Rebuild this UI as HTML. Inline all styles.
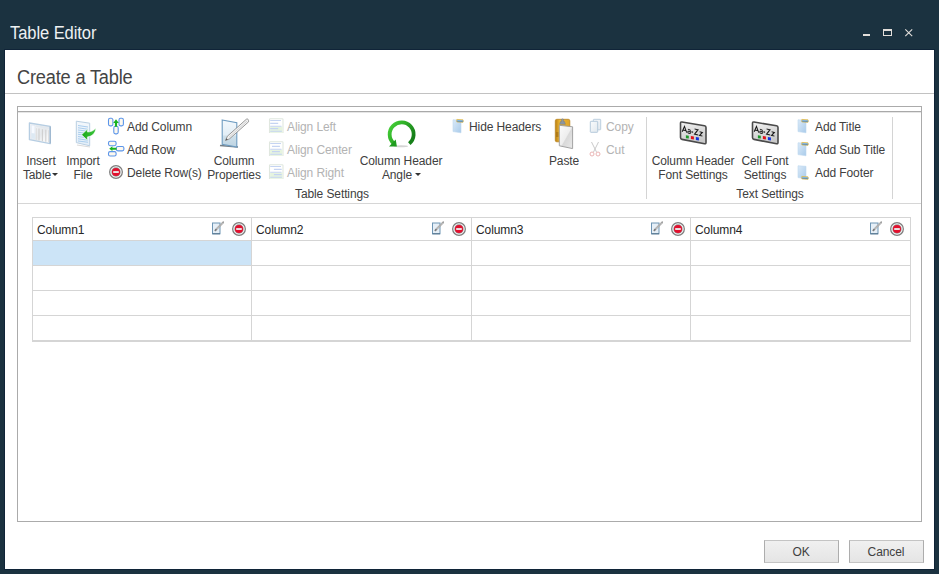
<!DOCTYPE html>
<html><head><meta charset="utf-8">
<style>
*{margin:0;padding:0;box-sizing:border-box}
html,body{width:939px;height:574px;overflow:hidden;background:#1b3240}
body{position:relative;font-family:"Liberation Sans",sans-serif}
.abs{position:absolute}
.t{position:absolute;font:12px/14px "Liberation Sans",sans-serif;white-space:nowrap;color:#404040;letter-spacing:-0.1px}
.c{text-align:center;width:120px}
.dis{color:#b3b3b3}
#win{position:absolute;left:4px;top:49px;width:931px;height:521px;border:1px solid #102438;background:#fff}
.hl{position:absolute;height:1px}
.vl{position:absolute;width:1px}
svg{position:absolute;overflow:visible}
.btn{position:absolute;top:540px;width:75px;height:23px;border:1px solid #adadad;border-top-color:#c4c4c4;border-bottom-color:#c4c4c4;background:linear-gradient(#f0f0f0,#e5e5e5)}
</style></head><body>

<!-- ICONS -->
<svg width="0" height="0" style="position:absolute">
<defs>
<symbol id="del" viewBox="0 0 14 14">
<circle cx="7" cy="7" r="6.35" fill="#f5f5f5" stroke="#7e7e7e" stroke-width="1.25"/>
<circle cx="7" cy="7" r="4.65" fill="#9c9c9c"/>
<circle cx="7" cy="7" r="4.05" fill="#e2102e"/>
<rect x="4.2" y="6.15" width="5.6" height="1.75" fill="#eef6f4"/>
</symbol>
<symbol id="edit" viewBox="0 0 13 14">
<rect x="1.5" y="2" width="7.5" height="10.8" fill="#e6eff7" stroke="#6e95b4" stroke-width="1"/>
<path d="M1.5 12.8H9" stroke="#4e6f88" stroke-width="1"/>
<path d="M5 8.6L12.4 1.2" stroke="#a2a2a2" stroke-width="2" stroke-linecap="round"/>
<path d="M5.6 8L12 1.6" stroke="#f2f2f2" stroke-width="0.8" stroke-dasharray="0.9 0.9"/>
<path d="M3.8 9.9L5.4 8.3" stroke="#777" stroke-width="1.5"/>
</symbol>
<linearGradient id="band" x1="0" y1="0" x2="0" y2="1"><stop offset="0" stop-color="#f0d878"/><stop offset="0.3" stop-color="#8fc0ea"/><stop offset="0.55" stop-color="#5a9ad8"/><stop offset="1" stop-color="#3a78bc"/></linearGradient>
<symbol id="pg" viewBox="0 0 12 16">
<defs><linearGradient id="pgg" x1="0" y1="0" x2="1" y2="1"><stop offset="0" stop-color="#dbeaf8"/><stop offset="1" stop-color="#a9cbea"/></linearGradient></defs>
<path d="M1 1.8L9 2.3V14.8L1 13.6Z" fill="url(#pgg)" stroke="#bcd6ee" stroke-width="0.6"/>
</symbol>
<symbol id="al" viewBox="0 0 16 16">
<rect x="1.5" y="1.8" width="13.5" height="14.6" rx="0.8" fill="#fff" stroke="#e0e7df" stroke-width="1.1"/>
<rect x="2.1" y="9.6" width="12.3" height="6.2" fill="#e6f4df"/>
</symbol>
<symbol id="font" viewBox="0 0 30 26">
<defs><linearGradient id="fg" x1="0" y1="0" x2="0.3" y2="1"><stop offset="0" stop-color="#f2f2f2"/><stop offset="1" stop-color="#c9c9c9"/></linearGradient></defs>
<path d="M2.5 3.3Q2.5 1.8 4 2L26.5 5.8Q28 6.1 28 7.6V22.5Q28 24 26.5 23.7L4 19.4Q2.5 19.1 2.5 17.6Z" fill="url(#fg)" stroke="#4a4a4a" stroke-width="1.6"/>
<g transform="skewY(12.4)" fill="none" stroke="#1a1a1a" stroke-width="1.05">
<path d="M4.2 10.8L6.5 5L8.8 10.8M5.1 8.9H7.9"/>
<path d="M9.9 7.1H11.5Q12.3 7.1 12.3 8V10.9M12.3 8.8H10.7Q9.8 8.8 9.8 9.85Q9.8 10.85 10.7 10.85H12.3" stroke-width="0.95"/>
<path d="M13.4 8.9H15.1" stroke-width="1.3"/>
<path d="M16.6 5.3H20L16.6 10.5H20.2"/>
<path d="M21.6 7.1H24.3L21.6 10.7H24.4"/>
</g>
<g transform="skewY(8.9)">
<rect x="7.9" y="14" width="2.9" height="2.9" fill="#1c9a2a"/>
<rect x="12.9" y="14" width="3" height="2.9" fill="#e0101a"/>
<rect x="17.9" y="14.3" width="3" height="3" fill="#1030e0"/>
</g>
</symbol>
</defs></svg>
<!-- title bar -->
<div class="abs" style="left:10px;top:23px;font:18px/20px 'Liberation Sans';color:#eef1f3;letter-spacing:-0.1px;white-space:nowrap;transform:scaleX(0.92);transform-origin:0 0">Table Editor</div>
<div class="abs" style="left:863px;top:34px;width:7px;height:2px;background:#e2deda"></div>
<div class="abs" style="left:883px;top:29px;width:9px;height:7px;border:1px solid #e2deda;border-top-width:2px"></div>
<svg style="left:905px;top:29px" width="8" height="8"><path d="M0.3 0.3L7.2 7.2M7.2 0.3L0.3 7.2" stroke="#e2deda" stroke-width="1.1"/></svg>

<div id="win"></div>
<div class="abs" style="left:17px;top:65px;font:20px/24px 'Liberation Sans';color:#444;letter-spacing:-0.2px;white-space:nowrap;transform:scaleX(0.91);transform-origin:0 0">Create a Table</div>
<div class="hl" style="left:5px;top:93px;width:929px;background:#c2c2c2"></div>

<!-- outer box -->
<div class="abs" style="left:17px;top:106px;width:905px;height:416px;border:1px solid #ababab"></div>
<div class="hl" style="left:18px;top:111px;width:903px;background:#a9a9a9"></div>
<div class="hl" style="left:18px;top:112px;width:903px;background:#e6e6e6"></div>
<div class="hl" style="left:18px;top:203px;width:903px;background:#d6d6d6"></div>
<div class="vl" style="left:646px;top:117px;height:82px;background:#d4d4d4"></div>
<div class="vl" style="left:892px;top:117px;height:82px;background:#d4d4d4"></div>


<!-- ribbon icons -->
<svg style="left:27px;top:121px" width="28" height="28" viewBox="0 0 28 28">
<defs><linearGradient id="itg" x1="0" y1="0" x2="1" y2="1"><stop offset="0" stop-color="#f3f5f7"/><stop offset="0.55" stop-color="#e6e9ec"/><stop offset="0.75" stop-color="#f5f6f7"/><stop offset="1" stop-color="#fbfbfb"/></linearGradient></defs>
<path d="M2.4 2L23.2 5.4V22.7L2.4 18.6Z" fill="url(#itg)" stroke="#b6cde2" stroke-width="1.3" stroke-linejoin="round"/>
<path d="M23.2 5.6V22.6" stroke="#98b3cc" stroke-width="1.2"/>
<path d="M4.3 3.9L7.9 4.5V18.2L4.3 17.5Z" fill="#f7faff" stroke="#d8e3ee" stroke-width="0.5"/>
<path d="M4.3 12L7.9 12.6V17.9L4.3 17.2Z" fill="#dde9f3"/>
<path d="M9 5L21.8 7.2" stroke="#e2e8ee" stroke-width="1.6"/>
<path d="M12 7.6V19.6M15.4 8.2V20.2M18.8 8.7V20.8" stroke="#cfcfcf" stroke-width="1.1"/>
<path d="M9.5 7.2V19.1M21.5 9.2V21.4" stroke="#e0e0e0" stroke-width="1"/>
</svg>
<svg style="left:74px;top:119px" width="24" height="30" viewBox="0 0 24 30">
<defs><linearGradient id="ifg" x1="0" y1="0" x2="0" y2="1"><stop offset="0" stop-color="#f4f8fc"/><stop offset="1" stop-color="#e3eef8"/></linearGradient>
<linearGradient id="ifa" x1="0" y1="0" x2="1" y2="0"><stop offset="0" stop-color="#18a818"/><stop offset="1" stop-color="#3cc43c"/></linearGradient></defs>
<path d="M3 26L16 28" stroke="#dadada" stroke-width="1.2"/>
<path d="M2.3 2.2L15.7 4.2V26.8L2.3 23.6Z" fill="url(#ifg)" stroke="#b9cfe2" stroke-width="1"/>
<path d="M4 6H14M4 8.2H14M4 10.4H14M4 12.6H14M4 14.8H14M4 17H14M4 19.2H14M4 21.4H14" stroke="#a9cdee" stroke-width="1" transform="skewY(8)" />
<path d="M7.6 15.8L13.4 10.2V13C17 13 19.8 11.6 21.8 9C21.6 14.4 18 17.4 13.4 17.9V21.2Z" fill="url(#ifa)" stroke="#fff" stroke-width="0.6"/>
</svg>
<svg style="left:107px;top:117px" width="18" height="18" viewBox="0 0 18 18">
<rect x="1.5" y="1.3" width="4.4" height="7.6" rx="1.6" fill="#fdf8ee" stroke="#5b95ea" stroke-width="1.1"/>
<rect x="12" y="1.3" width="4.4" height="7.6" rx="1.6" fill="#fdf8ee" stroke="#5b95ea" stroke-width="1.1"/>
<rect x="6.8" y="9.3" width="4.4" height="7.6" rx="1.6" fill="#fdf8ee" stroke="#5b95ea" stroke-width="1.1"/>
<path d="M9 2.3L11.8 6H10.1V9.8H7.9V6H6.2Z" fill="#19b31d"/>
</svg>
<svg style="left:107px;top:140px" width="18" height="18" viewBox="0 0 18 18">
<rect x="1.5" y="1.3" width="7.6" height="4.4" rx="1.6" fill="#fdf8ee" stroke="#5b95ea" stroke-width="1.1"/>
<rect x="9.3" y="6.5" width="7.6" height="4.4" rx="1.6" fill="#fdf8ee" stroke="#5b95ea" stroke-width="1.1"/>
<rect x="1.5" y="11.6" width="7.6" height="4.4" rx="1.6" fill="#fdf8ee" stroke="#5b95ea" stroke-width="1.1"/>
<path d="M2.2 8.7L5.4 6.3V7.7H9.5V9.7H5.4V11.1Z" fill="#19b31d"/>
</svg>
<svg style="left:109px;top:165px" width="14" height="14"><use href="#del"/></svg>

<svg style="left:216px;top:116px" width="36" height="36" viewBox="0 0 36 36">
<defs><linearGradient id="cpg" x1="0" y1="0" x2="0" y2="1"><stop offset="0" stop-color="#f3f8fc"/><stop offset="0.55" stop-color="#e2eef6"/><stop offset="0.6" stop-color="#cfe0ea"/><stop offset="1" stop-color="#bcd3e2"/></linearGradient></defs>
<path d="M4 29.5L22 31" stroke="#3c4a55" stroke-width="1.6" opacity="0.7"/>
<path d="M6.2 4L20.8 6.6V31L6.2 28.3Z" fill="url(#cpg)" stroke="#6d9bc0" stroke-width="1.1"/>
<path d="M9.5 24.5L11.4 20.2L30.4 3.2Q32.6 2.2 32.6 5.8L13.6 22.8Z" fill="#f2f2f2" stroke="#8c8c8c" stroke-width="0.9" stroke-linejoin="round"/>
<path d="M13 21.2L31 5" stroke="#c4c4c4" stroke-width="0.7"/>
<path d="M9.5 24.5L10.5 22.3L11.8 23.5Z" fill="#505050"/>
</svg>

<svg style="left:268px;top:117px" width="16" height="18"><use href="#al" width="16" height="16"/>
<path d="M2.2 3.5H13M2.2 6.4H10.2M2.2 9.2H13.5M2.2 11.6H10.2M2.2 14.3H13.9" stroke="#c5d4f2" stroke-width="1.1"/></svg>
<svg style="left:268px;top:140px" width="16" height="18"><use href="#al" width="16" height="16"/>
<path d="M2.2 3.5H13M4 6.4H11.9M2.2 9.2H13.5M4 11.6H11.9M2.2 14.3H13.9" stroke="#c5d4f2" stroke-width="1.1"/></svg>
<svg style="left:268px;top:163px" width="16" height="18"><use href="#al" width="16" height="16"/>
<path d="M2.2 3.5H13M5.9 6.4H13.7M2.2 9.2H13.5M5.9 11.6H13.7M2.2 14.3H13.9" stroke="#c5d4f2" stroke-width="1.1"/></svg>
<svg style="left:384px;top:117px" width="34" height="32" viewBox="0 0 34 32">
<defs><linearGradient id="rg" x1="0" y1="0" x2="1" y2="0.6"><stop offset="0" stop-color="#47d23a"/><stop offset="0.5" stop-color="#2fae27"/><stop offset="1" stop-color="#17801a"/></linearGradient></defs>
<ellipse cx="17" cy="29.3" rx="7" ry="1" fill="#d4d4d4"/>
<path d="M25.3 26.6A12 12 0 1 0 9.6 26.25" fill="none" stroke="url(#rg)" stroke-width="3.8"/>
<path d="M5 29.6L12.9 29.6L11.7 22.4Z" fill="#1f9c1f"/>
</svg>

<svg style="left:451px;top:118px" width="14" height="16" viewBox="0 0 14 16"><use href="#pg" width="12" height="16" x="1"/>
<path d="M5.8 1.4L12 1.8Q12.7 3 12 4.3L5.8 3.9Z" fill="url(#band)" stroke="#dcb445" stroke-width="0.7"/></svg>

<svg style="left:552px;top:116px" width="24" height="36" viewBox="0 0 24 36">
<defs><linearGradient id="clg" x1="0" y1="0" x2="1" y2="0"><stop offset="0" stop-color="#b97f12"/><stop offset="0.3" stop-color="#ecb634"/><stop offset="1" stop-color="#dfa52a"/></linearGradient>
<linearGradient id="ppg" x1="0" y1="0" x2="1" y2="1"><stop offset="0" stop-color="#fbfbfb"/><stop offset="0.5" stop-color="#eeeeee"/><stop offset="0.55" stop-color="#d9d9d9"/><stop offset="1" stop-color="#e9e9e9"/></linearGradient></defs>
<rect x="3.3" y="3.3" width="14.5" height="22.5" rx="1.5" fill="url(#clg)" stroke="#b98420" stroke-width="0.8"/>
<rect x="4" y="16" width="2.5" height="5" fill="#9f6a10" opacity="0.6"/>
<path d="M7.6 8.3L8.4 5.6H9.5V3.2Q10.5 2.4 11.5 3.2V5.6H12.6L13.4 8.3Z" fill="#8d97a1" stroke="#6f7780" stroke-width="0.4"/>
<path d="M7.3 9.3L20.6 10.8V32.6L7.3 29.8Z" fill="url(#ppg)" stroke="#9a9a9a" stroke-width="0.9"/>
</svg>

<svg style="left:588px;top:117px" width="16" height="18" viewBox="0 0 16 18">
<defs><linearGradient id="cpy" x1="0" y1="0" x2="1" y2="1"><stop offset="0" stop-color="#fafcfd"/><stop offset="1" stop-color="#e1e8ee"/></linearGradient></defs>
<rect x="5.3" y="2.3" width="7.4" height="10.5" rx="0.6" fill="url(#cpy)" stroke="#bccfdf" stroke-width="1"/>
<rect x="2.3" y="4.3" width="7.4" height="11" rx="0.6" fill="url(#cpy)" stroke="#b6cadb" stroke-width="1"/>
</svg>
<svg style="left:588px;top:141px" width="14" height="17" viewBox="0 0 14 17">
<path d="M3.5 1L8.5 11M10.5 1L5.5 11" stroke="#c4c4c4" stroke-width="0.9"/>
<circle cx="4" cy="13" r="2" fill="none" stroke="#eab4b4" stroke-width="1"/>
<circle cx="10" cy="13" r="2" fill="none" stroke="#eab4b4" stroke-width="1"/>
</svg>

<svg style="left:678px;top:120px" width="30" height="26"><use href="#font"/></svg>
<svg style="left:750px;top:120px" width="30" height="26"><use href="#font"/></svg>

<svg style="left:796px;top:118px" width="14" height="16" viewBox="0 0 14 16"><use href="#pg" width="12" height="16" x="1"/>
<path d="M5.8 1.4L12 1.8Q12.7 3 12 4.3L5.8 3.9Z" fill="url(#band)" stroke="#dcb445" stroke-width="0.7"/></svg>
<svg style="left:796px;top:141px" width="14" height="16" viewBox="0 0 14 16"><use href="#pg" width="12" height="16" x="1"/>
<path d="M5.8 1.4L12 1.8Q12.7 3 12 4.3L5.8 3.9Z" fill="url(#band)" stroke="#dcb445" stroke-width="0.7"/></svg>
<svg style="left:796px;top:164px" width="14" height="16" viewBox="0 0 14 16"><use href="#pg" width="12" height="16" x="1"/>
<path d="M5.8 12.4L12 12.8Q12.7 14 12 15.3L5.8 14.9Z" fill="url(#band)" stroke="#dcb445" stroke-width="0.7"/></svg>
<!-- ribbon texts -->
<div class="t c" style="left:-19px;top:154px">Insert</div>
<div class="t c" style="left:-23px;top:168px">Table</div>
<svg style="left:52px;top:173px" width="6" height="3"><path d="M0 0H6L3 3Z" fill="#333"/></svg>
<div class="t c" style="left:23px;top:154px">Import</div>
<div class="t c" style="left:23px;top:168px">File</div>

<div class="t" style="left:127px;top:120px">Add Column</div>
<div class="t" style="left:127px;top:143px">Add Row</div>
<div class="t" style="left:127px;top:166px">Delete Row(s)</div>

<div class="t c" style="left:174px;top:154px">Column</div>
<div class="t c" style="left:174px;top:168px">Properties</div>

<div class="t dis" style="left:287px;top:120px">Align Left</div>
<div class="t dis" style="left:287px;top:143px">Align Center</div>
<div class="t dis" style="left:287px;top:166px">Align Right</div>

<div class="t c" style="left:341px;top:154px">Column Header</div>
<div class="t c" style="left:337px;top:168px">Angle</div>
<svg style="left:415px;top:173px" width="6" height="3"><path d="M0 0H6L3 3Z" fill="#333"/></svg>

<div class="t c" style="left:272px;top:187px">Table Settings</div>

<div class="t" style="left:469px;top:120px">Hide Headers</div>
<div class="t c" style="left:504px;top:154px">Paste</div>
<div class="t dis" style="left:606px;top:120px">Copy</div>
<div class="t dis" style="left:606px;top:143px">Cut</div>

<div class="t c" style="left:633px;top:154px">Column Header</div>
<div class="t c" style="left:633px;top:168px">Font Settings</div>
<div class="t c" style="left:705px;top:154px">Cell Font</div>
<div class="t c" style="left:705px;top:168px">Settings</div>
<div class="t c" style="left:710px;top:187px">Text Settings</div>

<div class="t" style="left:815px;top:120px">Add Title</div>
<div class="t" style="left:815px;top:143px">Add Sub Title</div>
<div class="t" style="left:815px;top:166px">Add Footer</div>

<!-- table -->
<div class="abs" style="left:32px;top:217px;width:879px;height:125px;border:1px solid #d5d5d5;border-bottom-width:2px"></div>
<div class="abs" style="left:33px;top:241px;width:218px;height:24px;background:#cce4f7"></div>
<div class="hl" style="left:33px;top:240px;width:877px;background:#d5d5d5"></div>
<div class="hl" style="left:33px;top:265px;width:877px;background:#d5d5d5"></div>
<div class="hl" style="left:33px;top:290px;width:877px;background:#d5d5d5"></div>
<div class="hl" style="left:33px;top:315px;width:877px;background:#d5d5d5"></div>
<div class="vl" style="left:251px;top:218px;height:122px;background:#d5d5d5"></div>
<div class="vl" style="left:471px;top:218px;height:122px;background:#d5d5d5"></div>
<div class="vl" style="left:690px;top:218px;height:122px;background:#d5d5d5"></div>
<div class="t" style="left:37px;top:223px;color:#262626">Column1</div>
<div class="t" style="left:256px;top:223px;color:#262626">Column2</div>
<div class="t" style="left:476px;top:223px;color:#262626">Column3</div>
<div class="t" style="left:695px;top:223px;color:#262626">Column4</div>

<svg style="left:211px;top:221px" width="13" height="14"><use href="#edit"/></svg>
<svg style="left:232px;top:222px" width="14" height="14"><use href="#del"/></svg>
<svg style="left:431px;top:221px" width="13" height="14"><use href="#edit"/></svg>
<svg style="left:452px;top:222px" width="14" height="14"><use href="#del"/></svg>
<svg style="left:650px;top:221px" width="13" height="14"><use href="#edit"/></svg>
<svg style="left:671px;top:222px" width="14" height="14"><use href="#del"/></svg>
<svg style="left:869px;top:221px" width="13" height="14"><use href="#edit"/></svg>
<svg style="left:890px;top:222px" width="14" height="14"><use href="#del"/></svg>
<!-- buttons -->
<div class="btn" style="left:764px"></div>
<div class="btn" style="left:849px"></div>
<div class="t c" style="left:741px;top:545px">OK</div>
<div class="t c" style="left:826px;top:545px">Cancel</div>
</body></html>
